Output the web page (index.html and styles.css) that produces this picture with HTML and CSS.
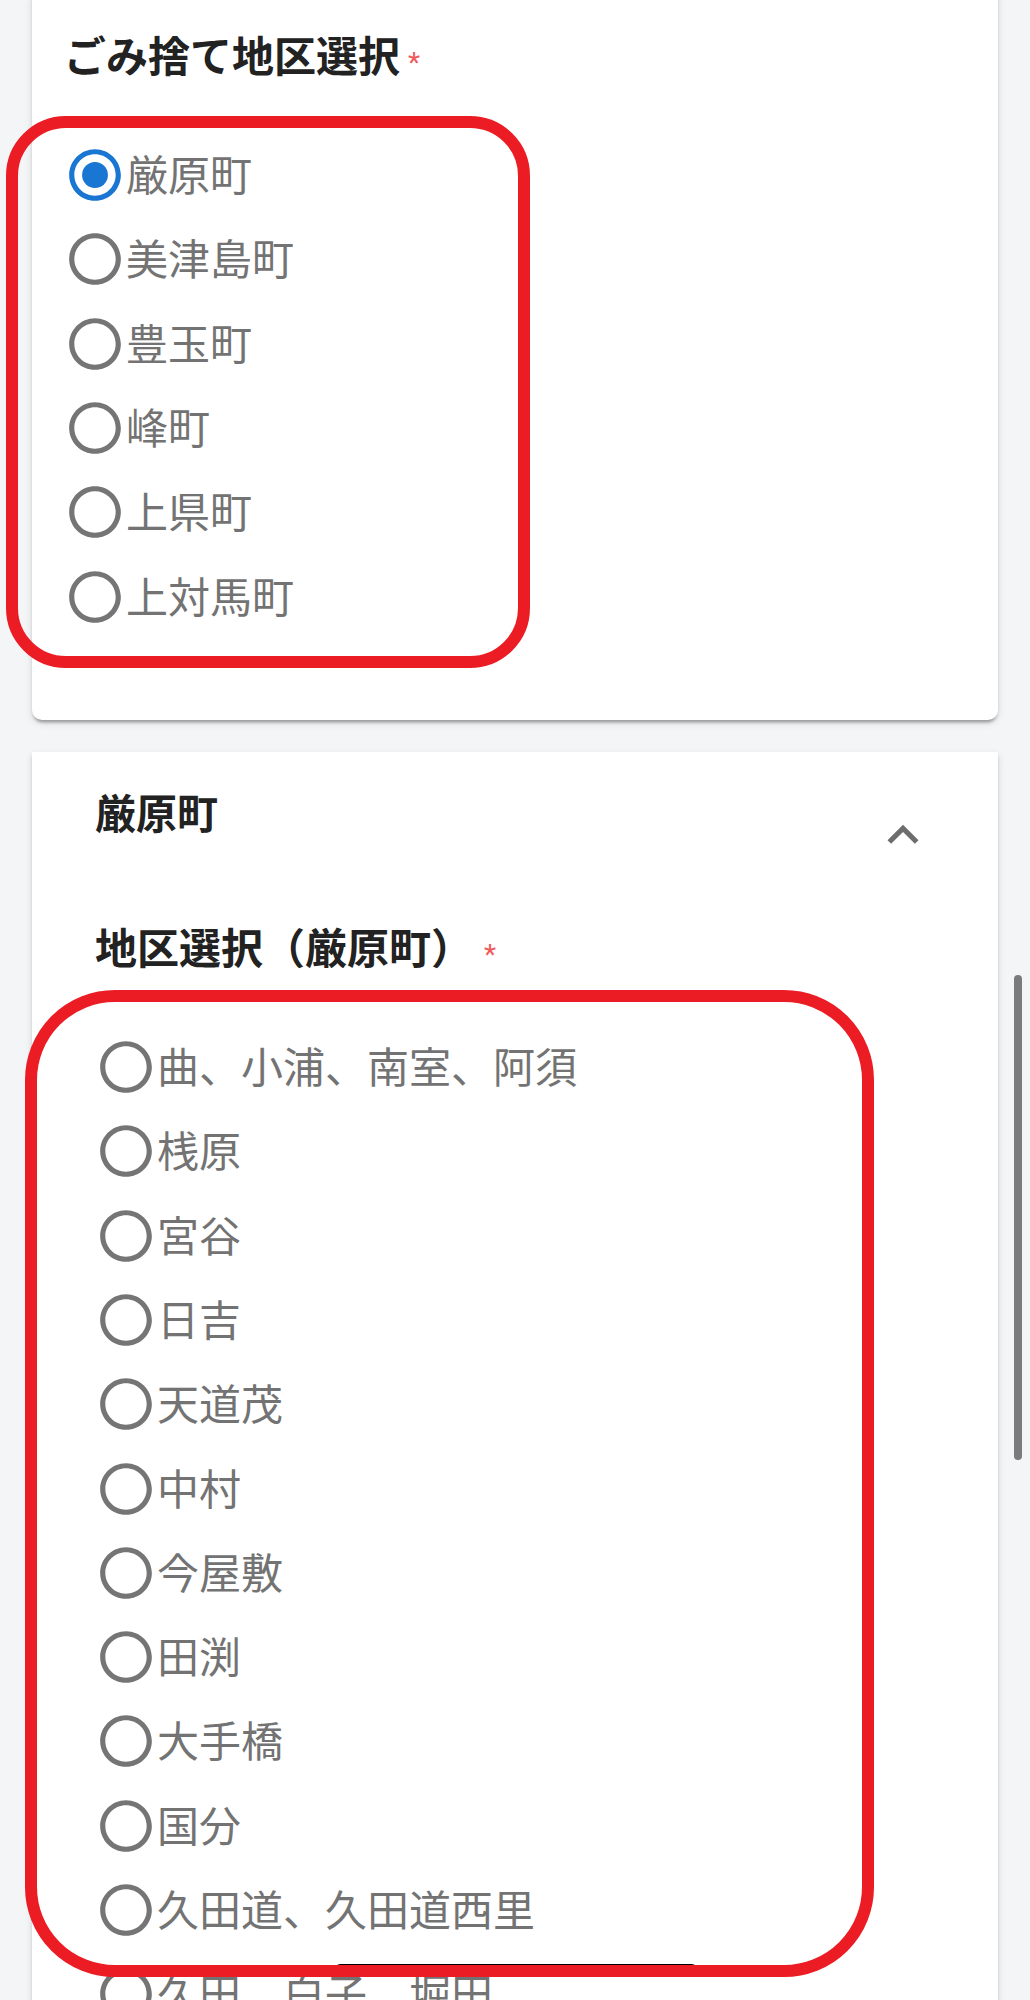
FILE: index.html
```html
<!DOCTYPE html>
<html lang="ja">
<head>
<meta charset="utf-8">
<title>ごみ捨て地区選択</title>
<link rel="stylesheet" href="styles.css">
</head>
<body>
<div class="page">
  <section class="card card-top">
    <div class="field-label">ごみ捨て地区選択<span class="req">*</span></div>
    <div class="radio-group">
      <label class="radio-row"><span class="radio checked"><svg viewBox="0 0 24 24"><path d="M12 2C6.48 2 2 6.48 2 12s4.48 10 10 10 10-4.48 10-10S17.52 2 12 2zm0 18c-4.42 0-8-3.58-8-8s3.58-8 8-8 8 3.58 8 8-3.58 8-8 8z"/><circle cx="12" cy="12" r="5"/></svg></span><span class="radio-text">厳原町</span></label>
      <label class="radio-row"><span class="radio"><svg viewBox="0 0 24 24"><path d="M12 2C6.48 2 2 6.48 2 12s4.48 10 10 10 10-4.48 10-10S17.52 2 12 2zm0 18c-4.42 0-8-3.58-8-8s3.58-8 8-8 8 3.58 8 8-3.58 8-8 8z"/></svg></span><span class="radio-text">美津島町</span></label>
      <label class="radio-row"><span class="radio"><svg viewBox="0 0 24 24"><path d="M12 2C6.48 2 2 6.48 2 12s4.48 10 10 10 10-4.48 10-10S17.52 2 12 2zm0 18c-4.42 0-8-3.58-8-8s3.58-8 8-8 8 3.58 8 8-3.58 8-8 8z"/></svg></span><span class="radio-text">豊玉町</span></label>
      <label class="radio-row"><span class="radio"><svg viewBox="0 0 24 24"><path d="M12 2C6.48 2 2 6.48 2 12s4.48 10 10 10 10-4.48 10-10S17.52 2 12 2zm0 18c-4.42 0-8-3.58-8-8s3.58-8 8-8 8 3.58 8 8-3.58 8-8 8z"/></svg></span><span class="radio-text">峰町</span></label>
      <label class="radio-row"><span class="radio"><svg viewBox="0 0 24 24"><path d="M12 2C6.48 2 2 6.48 2 12s4.48 10 10 10 10-4.48 10-10S17.52 2 12 2zm0 18c-4.42 0-8-3.58-8-8s3.58-8 8-8 8 3.58 8 8-3.58 8-8 8z"/></svg></span><span class="radio-text">上県町</span></label>
      <label class="radio-row"><span class="radio"><svg viewBox="0 0 24 24"><path d="M12 2C6.48 2 2 6.48 2 12s4.48 10 10 10 10-4.48 10-10S17.52 2 12 2zm0 18c-4.42 0-8-3.58-8-8s3.58-8 8-8 8 3.58 8 8-3.58 8-8 8z"/></svg></span><span class="radio-text">上対馬町</span></label>
    </div>
  </section>

  <section class="card card-accordion">
    <div class="acc-header">
      <div class="acc-title">厳原町</div>
      <svg class="chevron" viewBox="0 0 24 24"><path d="M12 8l-6 6 1.41 1.41L12 10.830l4.59 4.58L18 14z"/></svg>
    </div>
    <div class="acc-body">
      <div class="field-label sub">地区選択（厳原町）<span class="req req-far">*</span></div>
      <div class="radio-group">
        <label class="radio-row"><span class="radio"><svg viewBox="0 0 24 24"><path d="M12 2C6.48 2 2 6.48 2 12s4.48 10 10 10 10-4.48 10-10S17.52 2 12 2zm0 18c-4.42 0-8-3.58-8-8s3.58-8 8-8 8 3.58 8 8-3.58 8-8 8z"/></svg></span><span class="radio-text">曲、小浦、南室、阿須</span></label>
        <label class="radio-row"><span class="radio"><svg viewBox="0 0 24 24"><path d="M12 2C6.48 2 2 6.48 2 12s4.48 10 10 10 10-4.48 10-10S17.52 2 12 2zm0 18c-4.42 0-8-3.58-8-8s3.58-8 8-8 8 3.58 8 8-3.58 8-8 8z"/></svg></span><span class="radio-text">桟原</span></label>
        <label class="radio-row"><span class="radio"><svg viewBox="0 0 24 24"><path d="M12 2C6.48 2 2 6.48 2 12s4.48 10 10 10 10-4.48 10-10S17.52 2 12 2zm0 18c-4.42 0-8-3.58-8-8s3.58-8 8-8 8 3.58 8 8-3.58 8-8 8z"/></svg></span><span class="radio-text">宮谷</span></label>
        <label class="radio-row"><span class="radio"><svg viewBox="0 0 24 24"><path d="M12 2C6.48 2 2 6.48 2 12s4.48 10 10 10 10-4.48 10-10S17.52 2 12 2zm0 18c-4.42 0-8-3.58-8-8s3.58-8 8-8 8 3.58 8 8-3.58 8-8 8z"/></svg></span><span class="radio-text">日吉</span></label>
        <label class="radio-row"><span class="radio"><svg viewBox="0 0 24 24"><path d="M12 2C6.48 2 2 6.48 2 12s4.48 10 10 10 10-4.48 10-10S17.52 2 12 2zm0 18c-4.42 0-8-3.58-8-8s3.58-8 8-8 8 3.58 8 8-3.58 8-8 8z"/></svg></span><span class="radio-text">天道茂</span></label>
        <label class="radio-row"><span class="radio"><svg viewBox="0 0 24 24"><path d="M12 2C6.48 2 2 6.48 2 12s4.48 10 10 10 10-4.48 10-10S17.52 2 12 2zm0 18c-4.42 0-8-3.58-8-8s3.58-8 8-8 8 3.58 8 8-3.58 8-8 8z"/></svg></span><span class="radio-text">中村</span></label>
        <label class="radio-row"><span class="radio"><svg viewBox="0 0 24 24"><path d="M12 2C6.48 2 2 6.48 2 12s4.48 10 10 10 10-4.48 10-10S17.52 2 12 2zm0 18c-4.42 0-8-3.58-8-8s3.58-8 8-8 8 3.58 8 8-3.58 8-8 8z"/></svg></span><span class="radio-text">今屋敷</span></label>
        <label class="radio-row"><span class="radio"><svg viewBox="0 0 24 24"><path d="M12 2C6.48 2 2 6.48 2 12s4.48 10 10 10 10-4.48 10-10S17.52 2 12 2zm0 18c-4.42 0-8-3.58-8-8s3.58-8 8-8 8 3.58 8 8-3.58 8-8 8z"/></svg></span><span class="radio-text">田渕</span></label>
        <label class="radio-row"><span class="radio"><svg viewBox="0 0 24 24"><path d="M12 2C6.48 2 2 6.48 2 12s4.48 10 10 10 10-4.48 10-10S17.52 2 12 2zm0 18c-4.42 0-8-3.58-8-8s3.58-8 8-8 8 3.58 8 8-3.58 8-8 8z"/></svg></span><span class="radio-text">大手橋</span></label>
        <label class="radio-row"><span class="radio"><svg viewBox="0 0 24 24"><path d="M12 2C6.48 2 2 6.48 2 12s4.48 10 10 10 10-4.48 10-10S17.52 2 12 2zm0 18c-4.42 0-8-3.58-8-8s3.58-8 8-8 8 3.58 8 8-3.58 8-8 8z"/></svg></span><span class="radio-text">国分</span></label>
        <label class="radio-row"><span class="radio"><svg viewBox="0 0 24 24"><path d="M12 2C6.48 2 2 6.48 2 12s4.48 10 10 10 10-4.48 10-10S17.52 2 12 2zm0 18c-4.42 0-8-3.58-8-8s3.58-8 8-8 8 3.58 8 8-3.58 8-8 8z"/></svg></span><span class="radio-text">久田道、久田道西里</span></label>
        <label class="radio-row"><span class="radio"><svg viewBox="0 0 24 24"><path d="M12 2C6.48 2 2 6.48 2 12s4.48 10 10 10 10-4.48 10-10S17.52 2 12 2zm0 18c-4.42 0-8-3.58-8-8s3.58-8 8-8 8 3.58 8 8-3.58 8-8 8z"/></svg></span><span class="radio-text">久田、白子、堀田</span></label>
      </div>
    </div>
  </section>
</div>

<div class="annot annot-1"></div>
<div class="home-indicator"></div>
<div class="annot annot-2"></div>
<div class="scrollbar"></div>
</body>
</html>
```

FILE: styles.css
```css
* { box-sizing: border-box; }

html, body {
  margin: 0;
  padding: 0;
}

body {
  width: 1030px;
  height: 2000px;
  overflow: hidden;
  position: relative;
  background: #f4f5f7;
  font-family: "Noto Sans CJK JP", "Noto Sans", sans-serif;
  color: #222222;
}

.page {
  padding: 0 32px;
}

.card {
  background: #ffffff;
  box-shadow: 0 5px 3px -3px rgba(0, 0, 0, 0.22),
              0 3px 3px 0 rgba(0, 0, 0, 0.12),
              0 3px 8px 0 rgba(0, 0, 0, 0.10);
}

.card-top {
  margin-top: -12px;
  border-radius: 10px;
  padding: 35px 32px 81px 32px;
}

.card-accordion {
  margin-top: 32px;
  padding: 0 64px 0 63px;
  min-height: 1400px;
}

.field-label {
  font-size: 42px;
  line-height: 62px;
  font-weight: 700;
  color: #222222;
  white-space: nowrap;
}

.req {
  font-family: Roboto, "Noto Sans", sans-serif;
  font-weight: 400;
  font-size: 28px;
  line-height: 0;
  color: #f05a5a;
  margin-left: 8px;
}

.req-far {
  margin-left: 11px;
}

.radio-group {
  margin-top: 48px;
  display: flex;
  flex-direction: column;
}

.radio-row {
  height: 84.3px;
  display: flex;
  align-items: center;
}

.radio {
  width: 62px;
  height: 62px;
  flex: none;
  display: block;
}

.radio svg {
  width: 62px;
  height: 62px;
  display: block;
  fill: #757575;
}

.radio.checked svg {
  fill: #1976d2;
}

.radio-text {
  font-size: 42px;
  line-height: 62px;
  color: #737373;
  white-space: nowrap;
  margin-bottom: 4px;
}

.acc-header {
  display: flex;
  justify-content: space-between;
  align-items: flex-start;
  padding-top: 28px;
}

.acc-title {
  font-size: 41px;
  line-height: 62px;
  font-weight: 700;
  color: #222222;
}

.chevron {
  width: 62px;
  height: 62px;
  margin-top: 24.6px;
  fill: #6d6d6d;
  flex: none;
}

.acc-body {
  padding-top: 49px;
}

.acc-body .radio-group {
  margin-top: 47.5px;
}

/* annotation overlays */
.annot {
  position: absolute;
  border: 12px solid #ec1c24;
  z-index: 3;
}

.annot-1 {
  left: 6px;
  top: 116px;
  width: 524px;
  height: 552px;
  border-radius: 60px;
}

.annot-2 {
  left: 25px;
  top: 990px;
  width: 849px;
  height: 987px;
  border-radius: 90px;
}

.home-indicator {
  position: absolute;
  left: 334px;
  top: 1964px;
  width: 364px;
  height: 13px;
  background: #000000;
  border-radius: 7px;
  z-index: 2;
}

.scrollbar {
  position: absolute;
  left: 1014px;
  top: 975px;
  width: 8px;
  height: 485px;
  border-radius: 4px;
  background: #7a7b7d;
  z-index: 2;
}
```
